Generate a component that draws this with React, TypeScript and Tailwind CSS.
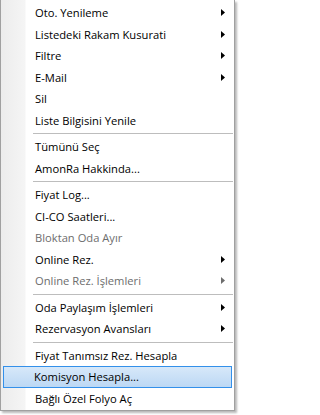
import React from "react";

type Item =
  | { kind: "item"; label: string; sub?: boolean; disabled?: boolean; active?: boolean }
  | { kind: "sep" };

const items: Item[] = [
  { kind: "item", label: "Oto. Yenileme", sub: true },
  { kind: "item", label: "Listedeki Rakam Kusurati", sub: true },
  { kind: "item", label: "Filtre", sub: true },
  { kind: "item", label: "E-Mail", sub: true },
  { kind: "item", label: "Sil" },
  { kind: "item", label: "Liste Bilgisini Yenile" },
  { kind: "sep" },
  { kind: "item", label: "Tümünü Seç" },
  { kind: "item", label: "AmonRa Hakkinda..." },
  { kind: "sep" },
  { kind: "item", label: "Fiyat Log..." },
  { kind: "item", label: "CI-CO Saatleri..." },
  { kind: "item", label: "Bloktan Oda Ayır", disabled: true },
  { kind: "item", label: "Online Rez.", sub: true },
  { kind: "item", label: "Online Rez. İşlemleri", sub: true, disabled: true },
  { kind: "sep" },
  { kind: "item", label: "Oda Paylaşım İşlemleri", sub: true },
  { kind: "item", label: "Rezervasyon Avansları", sub: true },
  { kind: "sep" },
  { kind: "item", label: "Fiyat Tanımsız Rez. Hesapla" },
  { kind: "item", label: "Komisyon Hesapla...", active: true },
  { kind: "item", label: "Bağlı Özel Folyo Aç" },
];

function Arrow({ disabled }: { disabled?: boolean }) {
  return (
    <svg width="4" height="7" viewBox="0 0 4 7" className="shrink-0">
      <path d="M0 0 L4 3.5 L0 7 Z" fill={disabled ? "#6d6d6d" : "#000"} />
    </svg>
  );
}

export default function App() {
  return (
    <div className="w-[237px] h-[415px] bg-white" style={{ fontFamily: '"Open Sans", "Noto Sans", sans-serif' }}>
      <div className="w-[235px] h-[411px] border border-t-0 border-[#a0a0a0] shadow-[2px_2px_2px_rgba(0,0,0,0.28)] bg-[linear-gradient(to_right,#ececec_0px,#f5f5f5_24px,#ffffff_25px)] flex flex-col pt-[2px]">
        {items.map((it, i) =>
          it.kind === "sep" ? (
            <div key={i} className="h-[5px] shrink-0 flex items-center pl-[32px] pr-px">
              <div className="h-px w-full bg-[#bdbdbd]" />
            </div>
          ) : (
            <div
              key={i}
              className={
                it.active
                  ? "h-[21.5px] shrink-0 mx-[2px] flex items-center pl-[30px] pr-[5px] border border-[#3390ea] bg-[linear-gradient(to_bottom,#d7e8f9,#bcd8f4)]"
                  : "h-[21.5px] shrink-0 mx-[2px] flex items-center pl-[31px] pr-[6px] border border-transparent"
              }
            >
              <span
                className={
                  "flex-1 text-[11.2px] leading-none whitespace-nowrap " +
                  (it.disabled ? "text-[#6d6d6d]" : "text-black")
                }
              >
                {it.label}
              </span>
              {it.sub && <Arrow disabled={it.disabled} />}
            </div>
          )
        )}
      </div>
    </div>
  );
}
